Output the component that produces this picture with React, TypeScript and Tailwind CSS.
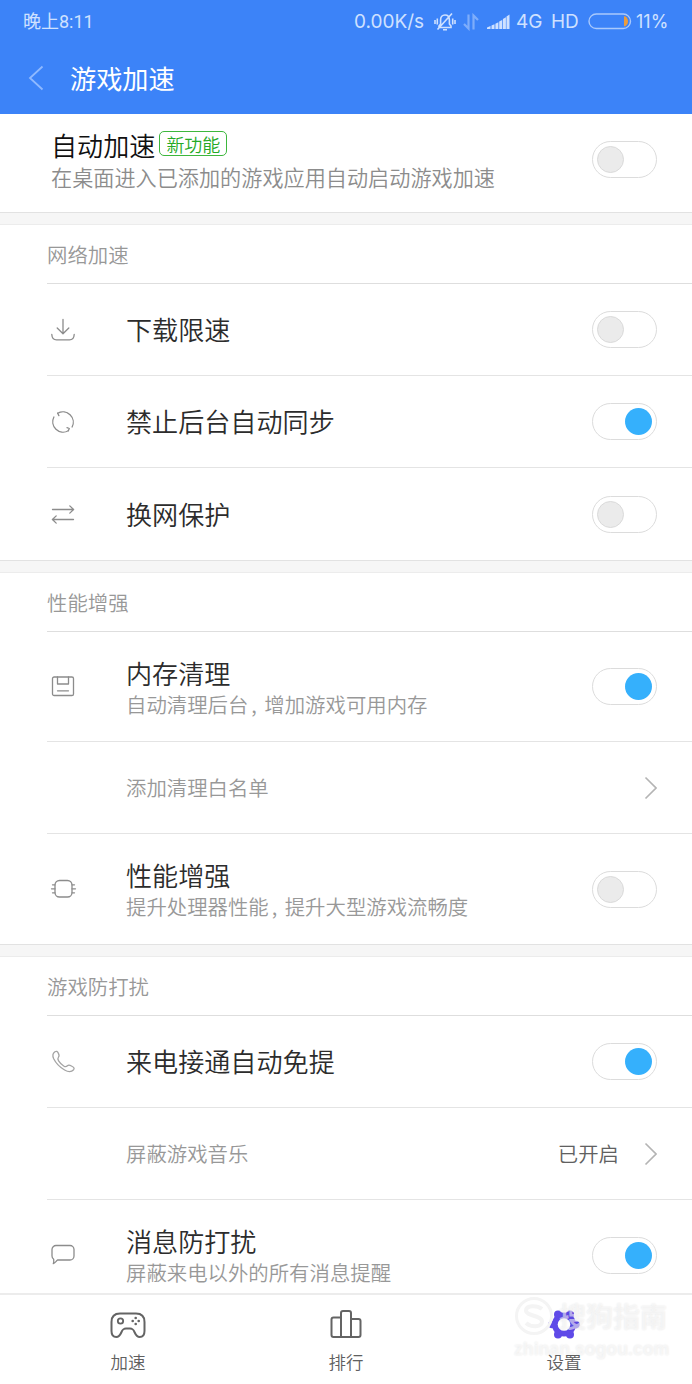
import type { ReactNode } from "react";

type ToggleProps = {
  on?: boolean;
};

function Toggle({ on }: ToggleProps) {
  return (
    <button
      role="switch"
      aria-checked={!!on}
      className={`flex h-[37px] w-[65px] shrink-0 items-center rounded-full border border-[#dcdcdc] bg-white ${
        on ? "justify-end pr-1" : "justify-start pl-1"
      }`}
    >
      <span
        className={`size-[27px] rounded-full ${
          on ? "bg-[#35b0fc]" : "border border-[#dadada] bg-[#ebebeb]"
        }`}
      />
    </button>
  );
}

function Chevron() {
  return (
    <svg width="13" height="24" viewBox="0 0 13 24" fill="none" stroke="#b4b4b4" strokeWidth="1.6">
      <path d="M1.500 1.500 12 12 1.500 22.500" />
    </svg>
  );
}

function RowIcon({ children }: { children: ReactNode }) {
  return (
    <svg
      width="28"
      height="28"
      viewBox="0 0 28 28"
      fill="none"
      stroke="#8c8c8c"
      strokeWidth="1.3"
      strokeLinecap="round"
      strokeLinejoin="round"
    >
      {children}
    </svg>
  );
}

const icons = {
  download: (
    <RowIcon>
      <path d="M14 3.500v14M8.200 12l5.800 5.800 5.800-5.800M2.800 18.500c.2 3.700 1.700 5.300 4.700 5.300h13c3 0 4.500-1.600 4.700-5.300" />
    </RowIcon>
  ),
  sync: (
    <RowIcon>
      <path d="M8.700 5.200A10.400 10.400 0 0 1 23.100 19M19.300 22.800A10.400 10.400 0 0 1 4.900 9" />
      <path d="M8.700 5.200l1.200 2.400M19.300 22.800l1-2.300-2.300-.8" />
    </RowIcon>
  ),
  swap: (
    <RowIcon>
      <path d="M3.500 9.500h20.800M20.800 5.900l3.800 3.600-3.800 3.600M24.500 19.500H3.700M7.200 15.900l-3.800 3.600 3.800 3.600" />
    </RowIcon>
  ),
  disk: (
    <RowIcon>
      <rect x="3.500" y="4" width="21" height="18.500" rx="1.600" />
      <path d="M8.500 4v7h11V4M8.500 17.800h11" />
    </RowIcon>
  ),
  chip: (
    <RowIcon>
      <rect x="6" y="5.500" width="17" height="16.500" rx="4.500" />
      <path d="M3.500 9.800H6M2.500 13.800H6M3.500 17.800H6M23 9.800h2.500M23 13.800h3.500M23 17.800h2.500" />
    </RowIcon>
  ),
  phone: (
    <RowIcon>
      <path
        stroke="#a4a4a4"
        d="M5.900 3.800c1.500-1 2.500-.4 3.400 1.300.9 1.700 1.300 2.800.2 4.100-.9 1.100-1 2 .1 3.700 1.400 2.200 3.300 4.100 5.400 5.300 1.400.8 2.300.7 3.400-.4 1.200-1.100 2.200-.8 4 .2 2 1.100 3.600 2 2.200 3.700-2 2.300-5.200 2.500-9 .3-4.900-2.800-9-7.400-10.900-11.200C3.500 8.200 3.700 5.400 5.900 3.800Z"
      />
    </RowIcon>
  ),
  message: (
    <RowIcon>
      <path d="M7 4.500h14a4 4 0 0 1 4 4v6.500a4 4 0 0 1-4 4H8.500c-1.300 1-2.200 2.900-4.200 3.700.6-1.600.6-2.700.4-4.400A4 4 0 0 1 3 15V8.500a4 4 0 0 1 4-4Z" />
    </RowIcon>
  ),
};

function Comma() {
  return <span className="inline-block w-4 pl-[3px]">,</span>;
}

type RowProps = {
  icon?: ReactNode;
  title: string;
  desc?: ReactNode;
  on?: boolean;
  last?: boolean;
};

function SettingRow({ icon, title, desc, on, last }: RowProps) {
  return (
    <div
      className={`ml-[47px] flex items-center pr-[35px] ${
        desc ? "h-[110px]" : "h-[92px]"
      } ${last ? "" : "border-b border-[#e4e4e4]"}`}
    >
      <div className="w-[79px] shrink-0 pl-0.5">{icon}</div>
      <div className={`flex-1 ${desc ? "pt-px" : "pb-px"}`}>
        <div className="text-[26.1px] leading-[34px] font-[350] text-[#2c2c2c]">{title}</div>
        {desc && (
          <div className="text-[20.4px] leading-[29px] font-[350] text-[#989898]">{desc}</div>
        )}
      </div>
      <Toggle on={on} />
    </div>
  );
}

function LinkRow({ title, value }: { title: string; value?: string }) {
  return (
    <div className="ml-[47px] flex h-[92px] items-center border-b border-[#e4e4e4] pr-[35px] pl-[79px]">
      <span className="flex-1 text-[20.4px] font-[350] text-[#989898]">{title}</span>
      {value && <span className="mr-[25px] text-[20.4px] font-[350] text-[#606060]">{value}</span>}
      <Chevron />
    </div>
  );
}

function Band() {
  return <div className="h-[13px] border-t border-b border-t-[#e2e2e2] border-b-[#ececec] bg-[#f6f6f6]" />;
}

function SectionTitle({ children }: { children: ReactNode }) {
  return (
    <div className="ml-[47px] flex h-[59px] items-center border-b border-[#dedede] text-[20.4px] font-[350] text-[#989898]">
      {children}
    </div>
  );
}

function StatusBar() {
  return (
    <div className="flex h-[42px] items-center pr-[22px] pl-[23px] text-[#cfe1ff]">
      <span className="flex-1 pt-px font-['Roboto','Noto_Sans_CJK_SC',sans-serif] text-[18px]">晚上8:11</span>
      <div className="flex items-center pt-px font-['Inter','Noto_Sans_CJK_SC',sans-serif] text-[19px] leading-[24px]">
        <span className="w-[80px] whitespace-nowrap">0.00K/s</span>
        <svg width="22" height="20" viewBox="0 0 22 20" fill="none" stroke="currentColor" strokeWidth="1.6">
          <path d="M5 15.500V14l1.600-2V8c0-3 1.700-5 4.400-5s4.400 2 4.400 5v4l1.600 2v1.500H5ZM9 17.800h4M3.500 17.500 18 1.500M3.300 6.500v6M1 8v4M18.700 6.500v6M21 8v4" />
        </svg>
        <svg className="ml-[7px] opacity-45" width="16" height="18" viewBox="0 0 16 18" fill="none" stroke="currentColor" strokeWidth="2.2">
          <path d="M5.500 1.500v14L1 11M10.500 16.500v-14L15 7" />
        </svg>
        <svg className="ml-2" width="23" height="16" viewBox="0 0 23 16" fill="currentColor">
          <path d="M0 15v-1.500L3.500 12v3zM4.500 15v-3.500l3-1.300V15zM8.400 15V9.700l3-1.400V15zM12.200 15V7.500l3-1.500V15zM15.900 15V5l3-1.800V15zM19.500 15V2.500l3-1.900V15z" />
        </svg>
        <span className="ml-[6px] w-[35px]">4G</span>
        <span className="w-[37px]">HD</span>
        <svg width="44" height="18" viewBox="0 0 44 18" fill="none">
          <rect x="1" y="1" width="41.500" height="14.500" rx="7.250" stroke="#a9c9fc" strokeWidth="1.400" />
          <path d="M36 3.300h1.200c1.900 1 2.800 3 2.800 5s-1 4-2.800 5H36Z" fill="#eb9c3c" />
        </svg>
        <span className="ml-[4px] w-[34px] text-[18px] whitespace-nowrap">11%</span>
      </div>
    </div>
  );
}

function Header() {
  return (
    <header className="h-[114px] shrink-0 bg-[#3c83f8]">
      <StatusBar />
      <div className="flex h-[72px] items-center pl-7">
        <svg width="16" height="26" viewBox="0 0 16 26" fill="none" stroke="#8fb9ff" strokeWidth="1.800">
          <path d="M14.500 1.500 2 13l12.500 11.500" />
        </svg>
        <h1 className="ml-[26px] text-[26.2px] leading-[36px] font-normal text-white">游戏加速</h1>
      </div>
    </header>
  );
}

function TabBar() {
  return (
    <nav className="relative grid h-[91px] shrink-0 grid-cols-[256px_180px_256px] border-t-2 border-[#ececec] bg-white text-[17.5px] leading-[24px] font-[350] text-[#606060]">
      <div className="flex flex-col items-center gap-[5px] pt-[12px]">
        <svg width="38" height="38" viewBox="0 0 38 38" fill="none" stroke="#646464" strokeWidth="2">
          <path d="M11 6.500h16c5.500 0 8.500 3 8.500 8.500v9c0 3.800-2 6-4.800 6-2.700 0-3.700-1.600-5-4.500-1.300-3-2-4-4.700-4h-4c-2.700 0-3.400 1-4.700 4-1.300 2.900-2.300 4.500-5 4.500-2.800 0-4.800-2.200-4.800-6v-9c0-5.500 3-8.500 8.500-8.500Z" />
          <circle cx="11.500" cy="14" r="2.700" strokeWidth="1.800" />
          <g fill="#646464" stroke="none">
            <circle cx="26.700" cy="11" r="1.300" />
            <circle cx="26.700" cy="17" r="1.300" />
            <circle cx="23.700" cy="14" r="1.300" />
            <circle cx="29.700" cy="14" r="1.300" />
          </g>
        </svg>
        <span>加速</span>
      </div>
      <div className="flex flex-col items-center gap-[5px] pt-[12px]">
        <svg width="38" height="38" viewBox="0 0 38 38" fill="none" stroke="#646464" strokeWidth="2" strokeLinejoin="round">
          <path d="M14 10.500H6.500q-2 0-2 2V28q0 2 2 2h25q2 0 2-2V14q0-2-2-2H24M14 30V6q0-2 2-2h6q2 0 2 2v24" />
        </svg>
        <span>排行</span>
      </div>
      <div className="flex flex-col items-center gap-[5px] pt-[12px]">
        <svg width="38" height="38" viewBox="0 0 38 38" fill="#5f4ae8">
          <circle cx="19" cy="17.500" r="12" />
          <circle cx="13" cy="7.500" r="4" />
          <circle cx="25" cy="7.500" r="4" />
          <circle cx="31" cy="17.500" r="3.700" />
          <circle cx="25" cy="27.500" r="4" />
          <circle cx="13" cy="27.500" r="4" />
          <circle cx="7" cy="17.500" r="3.700" />
          <circle cx="19" cy="17.500" r="6.300" fill="#fff" />
        </svg>
        <span>设置</span>
      </div>
      <div className="pointer-events-none absolute top-[1px] left-[514px] text-white/55 [text-shadow:0_0_2px_rgba(0,0,0,0.11)]">
        <div className="flex items-center gap-[5px]">
          <svg width="40" height="40" viewBox="0 0 40 40" fill="none" stroke="#f4f4f4">
            <circle cx="20" cy="20" r="17.500" strokeWidth="3" />
            <path d="M28 13c-5-4-16-4-16 1.500s16 5 16 11-11 6-16 1.500" strokeWidth="4" />
          </svg>
          <span className="text-[27px] leading-[40px] font-bold">搜狗指南</span>
        </div>
        <div className="pt-1 font-['Liberation_Sans',sans-serif] text-[17.7px] leading-[18px] font-bold whitespace-nowrap">
          zhinan.sogou.com
        </div>
      </div>
    </nav>
  );
}

export default function App() {
  return (
    <div className="flex h-[1384px] w-[692px] flex-col overflow-hidden bg-white font-['Noto_Sans_CJK_SC',sans-serif]">
      <Header />
      <main className="min-h-0 flex-1 overflow-hidden">
        <div className="flex h-[98px] items-center justify-between pr-[35px] pb-[7px] pl-[51px]">
          <div>
            <div className="flex items-center gap-1">
              <span className="text-[26.1px] leading-[34px] font-[350] text-[#101010]">自动加速</span>
              <span className="mb-0.5 flex h-[25px] items-center rounded-[5px] border-[1.5px] border-[#3db73d] px-1.5 text-[18px] leading-none font-[350] text-[#25aa25]">
                新功能
              </span>
            </div>
            <div className="text-[21.15px] leading-[30px] font-[350] text-[#8c8c8c]">
              在桌面进入已添加的游戏应用自动启动游戏加速
            </div>
          </div>
          <Toggle />
        </div>
        <Band />
        <SectionTitle>网络加速</SectionTitle>
        <SettingRow icon={icons.download} title="下载限速" />
        <SettingRow icon={icons.sync} title="禁止后台自动同步" on />
        <SettingRow icon={icons.swap} title="换网保护" last />
        <Band />
        <SectionTitle>性能增强</SectionTitle>
        <SettingRow
          icon={icons.disk}
          title="内存清理"
          desc={<>自动清理后台<Comma />增加游戏可用内存</>}
          on
        />
        <LinkRow title="添加清理白名单" />
        <SettingRow
          icon={icons.chip}
          title="性能增强"
          desc={<>提升处理器性能<Comma />提升大型游戏流畅度</>}
          last
        />
        <Band />
        <SectionTitle>游戏防打扰</SectionTitle>
        <SettingRow icon={icons.phone} title="来电接通自动免提" on />
        <LinkRow title="屏蔽游戏音乐" value="已开启" />
        <SettingRow icon={icons.message} title="消息防打扰" desc="屏蔽来电以外的所有消息提醒" on last />
      </main>
      <TabBar />
    </div>
  );
}
